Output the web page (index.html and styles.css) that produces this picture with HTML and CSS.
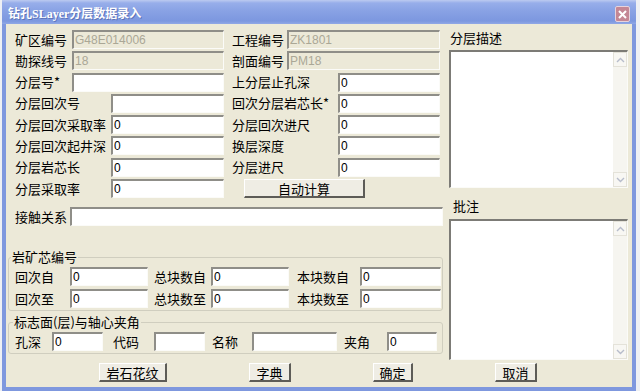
FILE: index.html
```html
<!DOCTYPE html>
<html lang="zh-CN">
<head>
    <meta charset="UTF-8">
    <title>钻孔SLayer分层数据录入</title>
    <link rel="stylesheet" href="styles.css">
</head>
<body>
<div class="window">
    <div class="titlebar">
        <span class="title">钻孔SLayer分层数据录入</span>
        <span class="close">
            <svg width="9" height="9" viewBox="0 0 9 9"><path d="M1 1L8 8M8 1L1 8" stroke="#fff" stroke-width="2" fill="none"/></svg>
        </span>
    </div>
    <div class="frame">
        <div class="main">
            <div class="left">
                <div class="form-grid">
                    <div class="pair"><span class="lbl w57">矿区编号</span><input class="field off" value="G48E014006" disabled></div>
                    <div class="pair"><span class="lbl w55">工程编号</span><input class="field off" value="ZK1801" disabled></div>

                    <div class="pair"><span class="lbl w57">勘探线号</span><input class="field off" value="18" disabled></div>
                    <div class="pair"><span class="lbl w55">剖面编号</span><input class="field off" value="PM18" disabled></div>

                    <div class="pair"><span class="lbl w57">分层号*</span><input class="field" value=""></div>
                    <div class="pair"><span class="lbl w106">上分层止孔深</span><input class="field" value="0"></div>

                    <div class="pair"><span class="lbl w96">分层回次号</span><input class="field" value=""></div>
                    <div class="pair"><span class="lbl w106">回次分层岩芯长*</span><input class="field" value="0"></div>

                    <div class="pair"><span class="lbl w96">分层回次采取率</span><input class="field" value="0"></div>
                    <div class="pair"><span class="lbl w106">分层回次进尺</span><input class="field" value="0"></div>

                    <div class="pair"><span class="lbl w96">分层回次起井深</span><input class="field" value="0"></div>
                    <div class="pair"><span class="lbl w106">换层深度</span><input class="field" value="0"></div>

                    <div class="pair"><span class="lbl w96">分层岩芯长</span><input class="field" value="0"></div>
                    <div class="pair"><span class="lbl w106">分层进尺</span><input class="field" value="0"></div>

                    <div class="pair"><span class="lbl w96">分层采取率</span><input class="field" value="0"></div>
                    <div class="pair"><button class="btn calc">自动计算</button></div>
                </div>

                <div class="pair contact"><span class="lbl w55">接触关系</span><input class="field" value=""></div>

                <fieldset class="group core">
                    <legend>岩矿芯编号</legend>
                    <div class="row">
                        <span class="lbl w55">回次自</span><input class="field w78" value="0">
                        <span class="lbl w63">总块数自</span><input class="field w78" value="0">
                        <span class="lbl w71">本块数自</span><input class="field w81" value="0">
                    </div>
                    <div class="row">
                        <span class="lbl w55">回次至</span><input class="field w78" value="0">
                        <span class="lbl w63">总块数至</span><input class="field w78" value="0">
                        <span class="lbl w71">本块数至</span><input class="field w81" value="0">
                    </div>
                </fieldset>

                <fieldset class="group angle">
                    <legend>标志面(层)与轴心夹角</legend>
                    <div class="row">
                        <span class="lbl w37">孔深</span><input class="field w51" value="0">
                        <span class="lbl w51p">代码</span><input class="field w51" value="">
                        <span class="lbl w47">名称</span><input class="field w85" value="">
                        <span class="lbl w50">夹角</span><input class="field w50f" value="0">
                    </div>
                </fieldset>
            </div>

            <div class="right">
                <div class="memo-label">分层描述</div>
                <div class="memo desc">
                    <textarea></textarea>
                    <div class="vscroll">
                        <span class="arrow"><svg width="9" height="6" viewBox="0 0 9 6"><path d="M1 5L4.5 1.5L8 5" stroke="#b7bccb" stroke-width="1.4" fill="none"/></svg></span>
                        <span class="arrow"><svg width="9" height="6" viewBox="0 0 9 6"><path d="M1 1L4.5 4.5L8 1" stroke="#b7bccb" stroke-width="1.4" fill="none"/></svg></span>
                    </div>
                </div>
                <div class="memo-label note">批注</div>
                <div class="memo note">
                    <textarea></textarea>
                    <div class="vscroll">
                        <span class="arrow"><svg width="9" height="6" viewBox="0 0 9 6"><path d="M1 5L4.5 1.5L8 5" stroke="#b7bccb" stroke-width="1.4" fill="none"/></svg></span>
                        <span class="arrow"><svg width="9" height="6" viewBox="0 0 9 6"><path d="M1 1L4.5 4.5L8 1" stroke="#b7bccb" stroke-width="1.4" fill="none"/></svg></span>
                    </div>
                </div>
            </div>
        </div>

        <div class="actions">
            <button class="btn b68">岩石花纹</button>
            <button class="btn b42">字典</button>
            <button class="btn b40">确定</button>
            <button class="btn b42">取消</button>
        </div>
    </div>
</div>
</body>
</html>
```

FILE: styles.css
```css
body {
    margin: 0;
    width: 640px;
    height: 391px;
    overflow: hidden;
    background-color: #eef0f4;
    font-family: "Noto Sans CJK SC", sans-serif;
    font-size: 13px;
    color: #000;
}
.window {
    margin-left: 2px;
    width: 634px;
    height: 391px;
    display: flex;
    flex-direction: column;
}
.titlebar {
    height: 24px;
    flex: none;
    box-sizing: border-box;
    padding: 0 6px 0 6px;
    display: flex;
    align-items: center;
    justify-content: space-between;
    background: linear-gradient(#bccaf0 0, #97aeea 3px, #8aa3e5 10px, #7c97df 21px, #90a8e6 24px);
}
.title {
    color: #fff;
    font: bold 12px "Liberation Serif", "Noto Sans CJK SC", serif;
    text-shadow: 1px 1px #5d74b8;
    padding-top: 2px;
}
.close {
    width: 15px;
    height: 16px;
    margin-top: 4px;
    box-sizing: border-box;
    background: #c48795;
    border: 1px solid #e6d3dd;
    border-radius: 2px;
    display: flex;
    align-items: center;
    justify-content: center;
}
.frame {
    flex: 1;
    background-color: #ece9d8;
    border: 4px solid #7f98de;
    border-top: none;
    display: flex;
    flex-direction: column;
}
.main {
    display: flex;
    padding: 0 4px 0 2px;
}
.left {
    width: 435px;
}
.form-grid {
    display: grid;
    grid-template-columns: 209px 208px;
    column-gap: 8px;
    row-gap: 2.3px;
    padding: 6px 0 0 7px;
}
.pair {
    display: flex;
    align-items: center;
    height: 19px;
}
.lbl {
    flex: none;
    white-space: nowrap;
    line-height: 16px;
    box-sizing: border-box;
}
.w37 { width: 37px; }
.w47 { width: 47px; padding-left: 7px; }
.w50 { width: 50px; padding-left: 7px; }
.w51p { width: 51px; padding-left: 10px; }
.w55 { width: 55px; }
.w57 { width: 57px; }
.w63 { width: 63px; padding-left: 6px; }
.w71 { width: 71px; padding-left: 8px; }
.w96 { width: 96px; }
.w106 { width: 106px; }
.field {
    height: 19px;
    box-sizing: border-box;
    flex: 1;
    min-width: 0;
    margin: 0;
    padding: 0 1px;
    border-style: solid;
    border-width: 2px 1px 1px 2px;
    border-color: #8f8e88 #fbfbf8 #fbfbf8 #8f8e88;
    background-color: #fff;
    font: 12px "Liberation Sans", sans-serif;
    color: #000;
    outline: none;
}
.field.off {
    background-color: #ece9d8;
    color: #aaa796;
}
.field.w78 { flex: none; width: 78px; }
.field.w81 { flex: none; width: 81px; }
.field.w51 { flex: none; width: 51px; }
.field.w85 { flex: none; width: 85px; }
.field.w50f { flex: none; width: 50px; }
.contact {
    margin: 9px 0 0 7px;
}
.group {
    margin: 24px 0 0 0;
    padding: 3px 0 2px 6px;
    border: 1px solid #d0cebf;
    border-radius: 3px;
    min-inline-size: auto;
}
.group legend {
    padding: 0 1px;
    margin-left: -4px;
    line-height: 14px;
    font-size: 13px;
}
.group.angle {
    margin-top: 4px;
    padding-top: 3px;
}
.group.angle legend {
    margin-left: -2px;
}
.row {
    display: flex;
    align-items: center;
    height: 19px;
}
.row + .row {
    margin-top: 3px;
}
.btn {
    height: 19px;
    box-sizing: border-box;
    padding: 0;
    background-color: #efede4;
    border-style: solid;
    border-width: 1px 2px 2px 1px;
    border-color: #fff #5d5c57 #5d5c57 #fff;
    font: 13px "Noto Sans CJK SC", sans-serif;
    line-height: 15px;
    color: #000;
}
.btn.calc {
    width: 121px;
    margin-left: 12px;
}
.right {
    width: 179px;
    margin-left: 6px;
    padding-top: 6px;
}
.memo-label {
    line-height: 16px;
    padding-left: 1px;
}
.memo-label.note {
    margin-top: 10px;
    padding-left: 4px;
}
.memo {
    display: flex;
    box-sizing: border-box;
    border-style: solid;
    border-width: 2px 1px 1px 2px;
    border-color: #7c7b76 #fbfbf8 #fbfbf8 #7c7b76;
    background-color: #fff;
}
.memo.desc {
    margin-top: 4px;
    height: 138px;
}
.memo.note {
    margin-top: 5px;
    height: 141px;
}
.memo textarea {
    flex: 1;
    border: none;
    resize: none;
    outline: none;
    margin: 0;
    padding: 0;
    background: #fff;
}
.vscroll {
    width: 14px;
    flex: none;
    background-color: #f6f5f0;
    display: flex;
    flex-direction: column;
    justify-content: space-between;
}
.arrow {
    height: 15px;
    box-sizing: border-box;
    border: 1px solid #e4e2d9;
    background-color: #f8f7f3;
    display: flex;
    align-items: center;
    justify-content: center;
}
.actions {
    display: flex;
    gap: 82px;
    padding-left: 93px;
    margin-top: 3px;
}
.b68 { width: 68px; }
.b42 { width: 42px; }
.b40 { width: 40px; }
```
